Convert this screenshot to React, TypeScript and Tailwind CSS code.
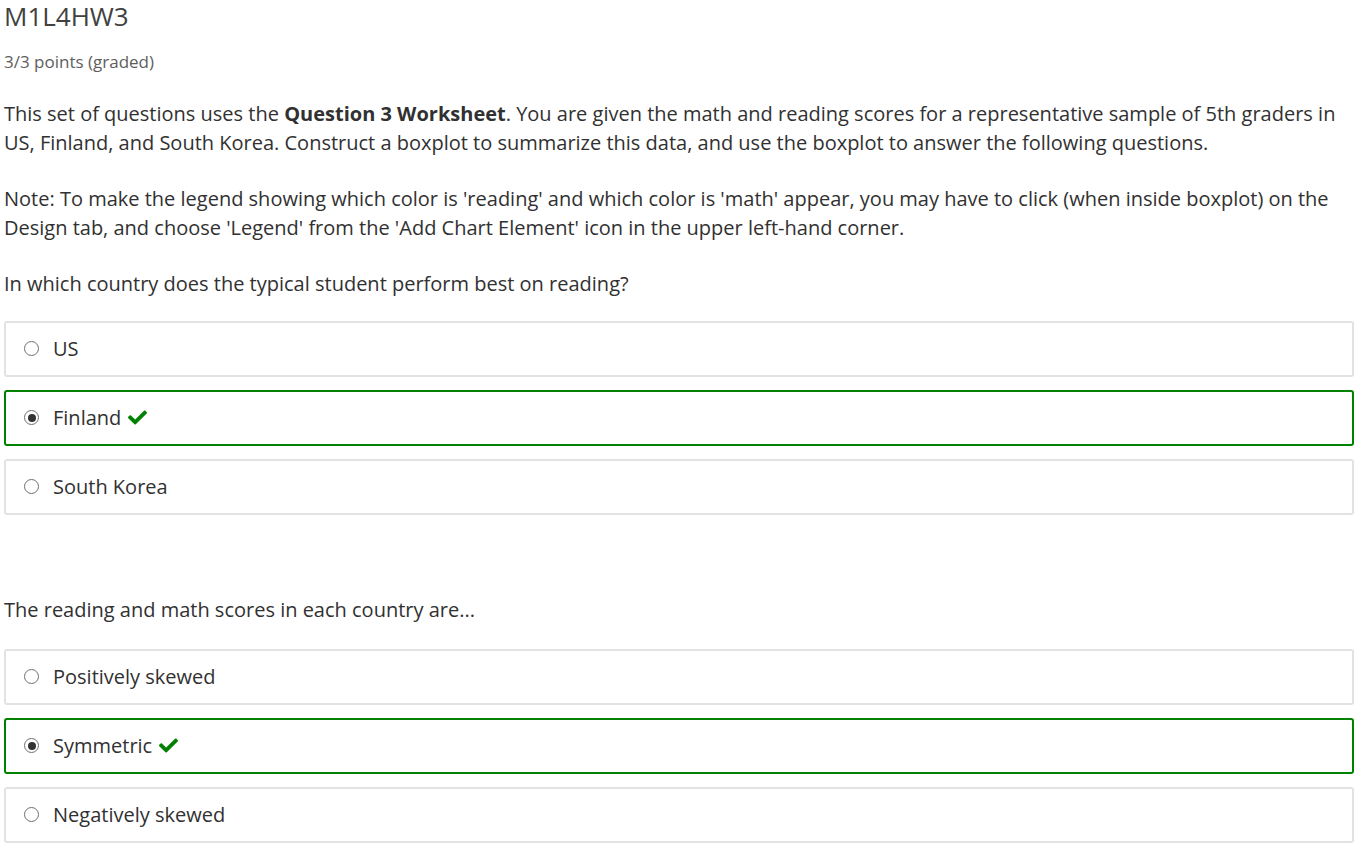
import React from 'react';

type Option = { label: string; selected?: boolean };

const q1: Option[] = [{ label: 'US' }, { label: 'Finland', selected: true }, { label: 'South Korea' }];
const q2: Option[] = [{ label: 'Positively skewed' }, { label: 'Symmetric', selected: true }, { label: 'Negatively skewed' }];

const Check = () => (
  <svg viewBox="0 0 512 512" className="h-[19px] w-[21px] ml-[6px]" fill="#008100">
    <path d="M173.9 439.4l-166.4-166.4c-10-10-10-26.2 0-36.2l36.2-36.2c10-10 26.2-10 36.2 0L192 312.7 432.1 72.6c10-10 26.2-10 36.2 0l36.2 36.2c10 10 10 26.2 0 36.2l-294.4 294.4c-10 10-26.2 10-36.2 0z" />
  </svg>
);

const Radio = ({ checked }: { checked?: boolean }) => (
  <span className="w-[15px] h-[15px] rounded-full border border-[#6f6f6f] bg-white flex items-center justify-center shrink-0">
    {checked && <span className="w-[8px] h-[8px] rounded-full bg-[#333]" />}
  </span>
);

const Choices = ({ options }: { options: Option[] }) => (
  <div className="flex flex-col gap-[13px]">
    {options.map((o) => (
      <div
        key={o.label}
        className={
          'h-[56px] rounded-[3px] border-2 flex items-center pl-[18px] ' +
          (o.selected ? 'border-[#008100]' : 'border-[#e2e2e2]')
        }
      >
        <Radio checked={o.selected} />
        <span className="ml-[14px] text-[20px] text-[#313131]">{o.label}</span>
        {o.selected && <Check />}
      </div>
    ))}
  </div>
);

export default function App() {
  return (
    <div className="bg-white min-h-screen px-[4px] w-[1358px] text-[#313131]" style={{ fontFamily: '"Open Sans", sans-serif' }}>
      <h2 className="text-[26px] leading-[32px] text-[#414141]">M1L4HW3</h2>
      <div className="mt-[19px] text-[17px] leading-[22px] text-[#5e5e5e]">3/3 points (graded)</div>

      <div className="mt-[27px] text-[20px] leading-[28.5px]">
        <p>
          This set of questions uses the <strong>Question 3 Worksheet</strong>. You are given the math and reading scores for a
          representative sample of 5th graders in US, Finland, and South Korea. Construct a boxplot to summarize this data, and use the
          boxplot to answer the following questions.
        </p>
        <p className="mt-[28px]">
          Note: To make the legend showing which color is 'reading' and which color is 'math' appear, you may have to click (when inside
          boxplot) on the Design tab, and choose 'Legend' from the 'Add Chart Element' icon in the upper left-hand corner.
        </p>
        <p className="mt-[28px]">In which country does the typical student perform best on reading?</p>
      </div>

      <div className="mt-[22px]">
        <Choices options={q1} />
      </div>

      <p className="mt-[81px] text-[20px] leading-[28px]">The reading and math scores in each country are...</p>

      <div className="mt-[25px]">
        <Choices options={q2} />
      </div>
    </div>
  );
}
